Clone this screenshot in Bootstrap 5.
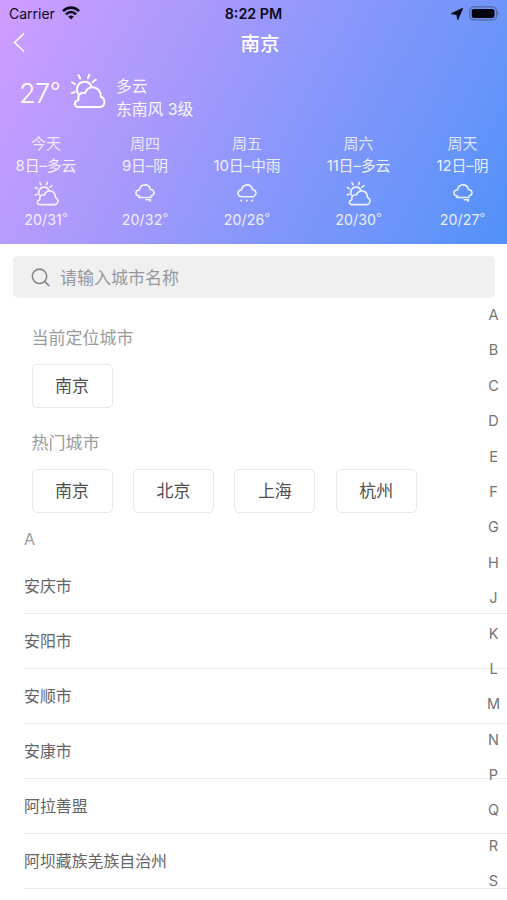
<!DOCTYPE html>
<html lang="zh-CN">
<head>
<meta charset="utf-8">
<meta name="viewport" content="width=device-width, initial-scale=1">
<title>南京</title>
<link href="https://cdn.jsdelivr.net/npm/bootstrap@5.3.0/dist/css/bootstrap.min.css" rel="stylesheet">
<style>
body{font-family:"Liberation Sans","Noto Sans CJK SC",sans-serif;height:900px;overflow:hidden;background:#fff}
.latin{font-family:Inter,"Noto Sans CJK SC",sans-serif}
.sky{height:244px;background:linear-gradient(118deg,#cf9dff 0%,#a899fc 34%,#8a97fb 56%,#6c95fa 80%,#5191f9 100%)}
.status{height:28px;color:#0b0b1c;font-size:14px;line-height:28px;display:grid;grid-template-columns:1fr auto 1fr}
.status .carrier{padding-left:9px}
.status .clock{font-weight:600;font-size:14.300px}
.title-bar{height:32px;display:grid;grid-template-columns:1fr auto 1fr;padding-left:13px}
.title-bar h1{font-size:19.5px;line-height:33px;font-weight:500}
.now{height:72px;padding:11px 0 0 19px}
.degrees{font-family:Inter,sans-serif;font-weight:300;font-size:27px;line-height:46px;width:47px;letter-spacing:-.5px}
.degrees i,.temps i{font-style:normal;display:inline-block}
.degrees i{font-size:24px;transform:translateY(-3px)}
.now-icon{margin-top:2px}
.now-text{font-size:15.8px;line-height:23px;margin-left:10px;opacity:.92;padding-top:4px}
.week{padding:1px 18px 0 15px;display:grid;grid-template-columns:62px 47px 68px 66px 53px;justify-content:space-between;font-size:15px;opacity:.86}
.week span{line-height:22px;white-space:nowrap}
.week .day{opacity:.9}
.week .date{letter-spacing:-.1px;font-size:14.900px}
.week svg{margin:4px 0 3px}
.week .temps{font-size:14.200px;letter-spacing:.1px}
.temps i{font-size:12.5px;opacity:.85;transform:translateY(-2px)}
.line-icon{fill:none;stroke:#fff;stroke-linecap:round;stroke-linejoin:round}
.search{margin:12px 12.5px 0 12.5px;height:42px;border-radius:5px;background:#f0f0f1;color:#97979b;font-size:17px;padding-left:18px}
.search span{margin-left:10.500px;padding-top:3px}
.picker{padding-left:31.600px}
.caption-line{color:#9b9b9b;font-size:17px;line-height:26px}
.city,.city:hover{width:81px;height:44px;border:1px solid #e8e8e8;border-radius:5px;color:#505050;font-size:17px;background:#fff;padding:1px 0 0;line-height:42px}
.letter-head{color:#9b9b9b;font-size:16px;line-height:24px;margin:14px 0 0 24px}
.towns{margin:8px 0 0 24px}
.towns .list-group-item,.towns .list-group-item:last-child{height:55px;padding:0;line-height:55px;font-size:15.9px;color:#646464;border-color:#ebebeb;border-width:0 0 1px;background:transparent}
.index{right:0;top:297px;width:27px;font-size:14.5px;color:#747474}
.index span{height:35.4px;line-height:35.4px;text-align:center}
</style>
<script src="https://cdn.jsdelivr.net/npm/bootstrap@5.3.0/dist/js/bootstrap.bundle.min.js"></script>
</head>
<body class="position-relative">
<svg class="d-none" aria-hidden="true">
  <symbol id="partly" viewBox="0 0 36 36">
    <path d="M8.500 34H29.500C35.500 34 36 25.500 30.800 23.800C31 13 18.500 10.800 15 20C10.500 19.200 7.200 22.500 8.600 27C3.800 28 3.500 34 8.500 34Z"/>
    <path d="M8.300 21C4.800 15.500 8.500 8.800 14.500 8.800C18.200 8.800 20.800 11 21.300 13.500M8.600 2.200L10.200 5.500M19.300 1.800L18 5.200M2 9.300L5 11M25.800 6.600L22.800 9M1.800 20.200L4.800 19"/>
  </symbol>
  <symbol id="overcast" viewBox="0 0 20 20">
    <path d="M4.500 12.600C-.2 12 -.2 6.800 4.400 6.500C5.600 -.2 14 -.4 15.500 6C19.800 6.200 20.300 11.400 16 12.600M3.800 14H16"/>
    <path d="M11 16.300H15.500M14.800 17.500H15.500"/>
  </symbol>
  <symbol id="rain" viewBox="0 0 20 20">
    <path d="M4.500 13.200C-.2 12.600 -.2 6.800 4.400 6.500C5.600 -.2 14 -.4 15.500 6C19.800 6.200 20.300 11.800 16 13.200H4.500"/>
    <path d="M4.200 17V17.100M9.800 17V17.100M15.200 17V17.100" stroke-width="2.200"/>
  </symbol>
</svg>

<header class="sky text-white">
  <div class="status latin">
    <div class="carrier d-flex align-items-center"><span>Carrier</span>
      <svg style="margin:-2px 0 0 7px" width="18" height="14" viewBox="0 0 18 14" fill="none" stroke="#0b0b1c" stroke-width="2.600"><path d="M1 5.200C5.600 .4 12.400 .4 17 5.200M3.900 8.300C6.900 5.300 11.100 5.300 14.100 8.300"/><path d="M6.200 10.600Q9 8.300 11.800 10.600L9 13.400Z" fill="#0b0b1c" stroke="none"/></svg>
    </div>
    <span class="clock">8:22 PM</span>
    <div class="d-flex align-items-center justify-content-end pe-2">
      <svg style="margin:-1px 6px 0 0" width="12" height="12" viewBox="0 0 11 11"><path d="M.5 5.300L10.500 .5L6.200 10.500L5.400 5.900Z" fill="#0b0b1c" stroke="#0b0b1c" stroke-width="1" stroke-linejoin="round"/></svg>
      <svg style="margin:-2px -1px 0 0" width="31" height="15" viewBox="0 0 31 15"><rect x=".7" y=".9" width="26.800" height="13" rx="4" fill="none" stroke="#52659f" stroke-width="1.200"/><rect x="2.700" y="2.900" width="22.800" height="9" rx="2.200" fill="#050510"/><path d="M28.500 5.200Q31 7.400 28.500 9.600Z" fill="#52659f"/></svg>
    </div>
  </div>

  <div class="title-bar">
    <svg class="line-icon" style="margin-top:5px" width="12" height="19" viewBox="0 0 12 19" stroke-width="1.700"><path d="M10.500 1L1.500 9.500L10.500 18"/></svg>
    <h1 class="m-0">南京</h1>
  </div>

  <div class="now d-flex align-items-start">
    <span class="degrees text-nowrap">27<i>°</i></span>
    <svg class="now-icon line-icon ms-1" width="36" height="36" stroke-width="2"><use href="#partly"/></svg>
    <div class="now-text latin"><div>多云</div><div>东南风 3级</div></div>
  </div>

  <div class="week latin">
    <div class="d-flex flex-column align-items-center"><span class="day">今天</span><span class="date">8日–多云</span><svg class="line-icon" width="25" height="25" stroke-width="2.300"><use href="#partly"/></svg><span class="temps">20/31<i>°</i></span></div>
    <div class="d-flex flex-column align-items-center"><span class="day">周四</span><span class="date">9日–阴</span><svg class="line-icon" width="20" height="25" stroke-width="1.600"><use href="#overcast"/></svg><span class="temps">20/32<i>°</i></span></div>
    <div class="d-flex flex-column align-items-center"><span class="day">周五</span><span class="date">10日–中雨</span><svg class="line-icon" width="20" height="25" stroke-width="1.600"><use href="#rain"/></svg><span class="temps">20/26<i>°</i></span></div>
    <div class="d-flex flex-column align-items-center"><span class="day">周六</span><span class="date">11日–多云</span><svg class="line-icon" width="25" height="25" stroke-width="2.300"><use href="#partly"/></svg><span class="temps">20/30<i>°</i></span></div>
    <div class="d-flex flex-column align-items-center"><span class="day">周天</span><span class="date">12日–阴</span><svg class="line-icon" width="20" height="25" stroke-width="1.600"><use href="#overcast"/></svg><span class="temps">20/27<i>°</i></span></div>
  </div>
</header>

<main>
  <div class="search d-flex align-items-center">
    <svg width="19" height="19" viewBox="0 0 19 19" fill="none" stroke="#87878b" stroke-width="1.600" stroke-linecap="round"><circle cx="8.500" cy="8.300" r="7.200"/><path d="M13.800 13.600L17.800 17.600"/></svg>
    <span>请输入城市名称</span>
  </div>

  <section class="picker">
    <div class="caption-line" style="padding-top:28px">当前定位城市</div>
    <div class="d-flex" style="margin-top:12px"><button class="btn city">南京</button></div>
    <div class="caption-line" style="padding-top:23px">热门城市</div>
    <div class="d-flex" style="margin-top:12px;gap:20.400px"><button class="btn city">南京</button><button class="btn city">北京</button><button class="btn city">上海</button><button class="btn city">杭州</button></div>
  </section>

  <div class="letter-head latin">A</div>
  <ul class="list-group list-group-flush towns">
    <li class="list-group-item">安庆市</li>
    <li class="list-group-item">安阳市</li>
    <li class="list-group-item">安顺市</li>
    <li class="list-group-item">安康市</li>
    <li class="list-group-item">阿拉善盟</li>
    <li class="list-group-item">阿坝藏族羌族自治州</li>
  </ul>
</main>

<nav class="index latin position-absolute d-flex flex-column">
  <span>A</span><span>B</span><span>C</span><span>D</span><span>E</span><span>F</span><span>G</span><span>H</span><span>J</span><span>K</span><span>L</span><span>M</span><span>N</span><span>P</span><span>Q</span><span>R</span><span>S</span>
</nav>
</body>
</html>
